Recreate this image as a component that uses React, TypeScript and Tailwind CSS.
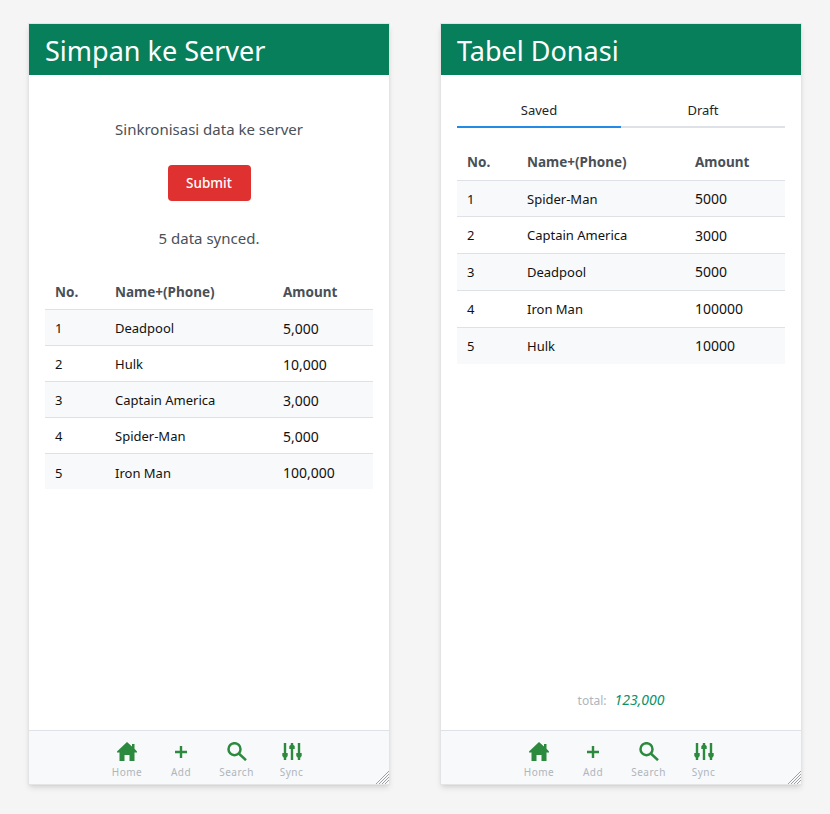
import React from "react";

const font = "font-['Segoe_UI','Noto_Sans',sans-serif]";

const leftRows = [
  ["1", "Deadpool", "5,000"],
  ["2", "Hulk", "10,000"],
  ["3", "Captain America", "3,000"],
  ["4", "Spider-Man", "5,000"],
  ["5", "Iron Man", "100,000"],
];

const rightRows = [
  ["1", "Spider-Man", "5000"],
  ["2", "Captain America", "3000"],
  ["3", "Deadpool", "5000"],
  ["4", "Iron Man", "100000"],
  ["5", "Hulk", "10000"],
];

function HomeIcon() {
  return (
    <svg width="20" height="19" viewBox="0 0 20 19" fill="#2b8a3e">
      <path d="M10 0 15 4.500V2h2.500v4.800L20 9.500v1h-2.500V19H12.500v-6h-5v6H2.500v-8.500H0v-1z" />
    </svg>
  );
}

function PlusIcon() {
  return (
    <svg width="12" height="12" viewBox="0 0 12 12" fill="#2b8a3e">
      <path d="M4.800 0h2.400v4.800H12v2.400H7.200V12H4.800V7.200H0V4.800h4.800z" />
    </svg>
  );
}

function SearchIcon() {
  return (
    <svg width="20" height="19" viewBox="0 0 20 19" fill="none" stroke="#2b8a3e" strokeWidth="2.500">
      <circle cx="7.500" cy="7.200" r="6" />
      <path d="M11.800 11.500 19 18.200" />
    </svg>
  );
}

function SyncIcon() {
  return (
    <svg width="20" height="17" viewBox="0 0 20 17" fill="#2b8a3e">
      <rect x="1.800" y="0" width="2.400" height="17" />
      <rect x="8.800" y="0" width="2.400" height="17" />
      <rect x="15.800" y="0" width="2.400" height="17" />
      <path d="M.300 10h5.400v3L3 16 .300 13zM7.300 6h5.400V3L10 1 7.300 3zM14.300 10h5.400v3L17 16l-2.700-3z" />
    </svg>
  );
}

function Footer() {
  const items = [
    { label: "Home", icon: <HomeIcon />, cls: "w-[54px]" },
    { label: "Add", icon: <PlusIcon />, cls: "w-[54px]" },
    { label: "Search", icon: <SearchIcon />, cls: "w-[57px]" },
    { label: "Sync", icon: <SyncIcon />, cls: "w-[53px]" },
  ];
  return (
    <div className="h-[54px] shrink-0 border-t border-[#dee2e6] bg-[#f8f9fa] flex justify-center">
      {items.map((it) => (
        <div key={it.label} className={`${it.cls} flex flex-col items-center`}>
          <div className="h-[34px] flex items-center justify-center pt-[7px]">{it.icon}</div>
          <span className="text-[10px] leading-[14px] tracking-[0.5px] text-[#adb5bd]">{it.label}</span>
        </div>
      ))}
    </div>
  );
}

function DataTable({
  rows,
  rowClass,
  headCell,
  textCell,
  amountCell,
}: {
  rows: string[][];
  rowClass: string;
  headCell: string;
  textCell: string;
  amountCell: string;
}) {
  return (
    <table className="w-[328px] table-fixed border-collapse">
      <thead>
        <tr className="h-[36px] border-b border-[#dee2e6] text-[13.500px]">
          <th className={`w-[60px] px-[10px] text-left font-bold text-[#495057] ${headCell}`}>No.</th>
          <th className={`w-[168px] px-[10px] text-left font-bold text-[#495057] ${headCell}`}>Name+(Phone)</th>
          <th className={`w-[100px] px-[10px] text-left font-bold text-[#495057] ${headCell}`}>Amount</th>
        </tr>
      </thead>
      <tbody className="text-[13px]">
        {rows.map((r, i) => (
          <tr
            key={r[0]}
            className={`${rowClass} ${i % 2 === 0 ? "bg-[#f8f9fa]" : "bg-white"} ${i < rows.length - 1 ? "border-b border-[#dee2e6]" : ""}`}
          >
            <td className={`${textCell} px-[10px] text-[#111]`}>{r[0]}</td>
            <td className={`${textCell} px-[10px] text-[#111]`}>{r[1]}</td>
            <td className={`${amountCell} px-[10px] text-sm text-[#111]`}>{r[2]}</td>
          </tr>
        ))}
      </tbody>
    </table>
  );
}

function ResizeGrip() {
  return (
    <svg className="absolute right-0 bottom-0" width="14" height="14" viewBox="0 0 14 14" stroke="#a0a0a0" strokeWidth="1">
      <path d="M1 14 14 1M4 14 14 4M7 14 14 7M10 14 14 10" />
    </svg>
  );
}

function Panel({ title, children }: { title: string; children: React.ReactNode }) {
  return (
    <div className="relative w-[362px] h-[762px] shrink-0 overflow-hidden border border-[#e4e4e4] bg-white shadow-md flex flex-col">
      <div className="h-[51px] shrink-0 bg-[#087f5b] px-4 pt-[1px] flex items-center">
        <h1 className="text-[27px] leading-none text-white">{title}</h1>
      </div>
      <div className="flex-1 min-h-0 flex flex-col">{children}</div>
      <Footer />
      <ResizeGrip />
    </div>
  );
}

export default function App() {
  return (
    <div className={`${font} min-h-[814px] bg-[#f5f5f5] pt-[23px] pl-[28px] flex gap-[50px]`}>
      <Panel title="Simpan ke Server">
        <div className="px-4 flex flex-col items-center text-[#495057]">
          <p className="mt-[44px] text-[15px] leading-5">Sinkronisasi data ke server</p>
          <button className="mt-[26px] h-[36px] w-[83px] rounded bg-[#e03131] text-[13.500px] font-medium text-white">Submit</button>
          <p className="mt-[27px] mb-[25px] text-[15px] leading-5">5 data synced.</p>
          <DataTable rows={leftRows} rowClass="h-[36px]" headCell="pt-[2px]" textCell="pt-[4px]" amountCell="pt-[3px]" />
        </div>
      </Panel>
      <Panel title="Tabel Donasi">
        <div className="flex-1 px-4 flex flex-col items-center">
          <div className="mt-[22px] w-full flex text-[13px] text-[#212529]">
            <div className="flex-1 h-[31px] text-center border-b-2 border-[#228be6] leading-[26px]">Saved</div>
            <div className="flex-1 h-[31px] text-center border-b-2 border-[#dee2e6] leading-[26px]">Draft</div>
          </div>
          <div className="mt-[16px]">
            <DataTable rows={rightRows} rowClass="h-[36.800px]" headCell="pt-[1px]" textCell="pt-[2px]" amountCell="pt-[1px]" />
          </div>
          <div className="mt-auto mb-[20px] flex items-baseline gap-2">
            <span className="text-[12px] text-[#adb5bd]">total:</span>
            <span className="text-sm italic text-[#099268]">123,000</span>
          </div>
        </div>
      </Panel>
    </div>
  );
}
